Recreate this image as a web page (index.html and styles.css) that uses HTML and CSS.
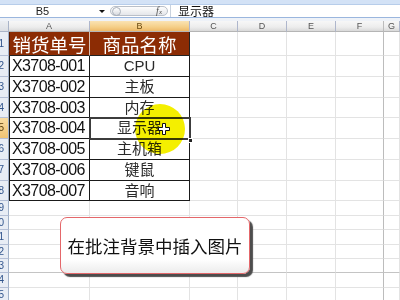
FILE: index.html
```html
<!DOCTYPE html>
<html lang="zh-CN">
<head>
<meta charset="utf-8">
<title>批注</title>
<link rel="stylesheet" href="styles.css">
</head>
<body>
<div class="app">
  <div class="strip"></div>
  <div class="fbar">
    <div class="namebox"><span class="nm">B5</span><span class="dd"></span></div>
    <div class="pill"><span class="knob"></span><span class="fx">f<small>x</small></span></div>
    <div class="formula">显示器</div>
  </div>
  <div class="gap"></div>
  <div class="sheet">
    <div class="corner"></div><div class="ch">A</div><div class="ch on">B</div><div class="ch">C</div><div class="ch">D</div><div class="ch">E</div><div class="ch pf">F</div><div class="ch">G</div>

    <div class="rh"><span>1</span></div><div class="h a">销货单号</div><div class="h b">商品名称</div><i class="c"></i><i class="c"></i><i class="c"></i><i class="c pf"></i><i class="c"></i>
    <div class="rh"><span>2</span></div><div class="d a">X3708-001</div><div class="d b">CPU</div><i class="c"></i><i class="c"></i><i class="c"></i><i class="c pf"></i><i class="c"></i>
    <div class="rh"><span>3</span></div><div class="d a">X3708-002</div><div class="d b">主板</div><i class="c"></i><i class="c"></i><i class="c"></i><i class="c pf"></i><i class="c"></i>
    <div class="rh"><span>4</span></div><div class="d a">X3708-003</div><div class="d b">内存</div><i class="c"></i><i class="c"></i><i class="c"></i><i class="c pf"></i><i class="c"></i>
    <div class="rh on"><span>5</span></div><div class="d a">X3708-004</div><div class="d b sel">显示器</div><i class="c"></i><i class="c"></i><i class="c"></i><i class="c pf"></i><i class="c"></i>
    <div class="rh"><span>6</span></div><div class="d a">X3708-005</div><div class="d b">主机箱</div><i class="c"></i><i class="c"></i><i class="c"></i><i class="c pf"></i><i class="c"></i>
    <div class="rh"><span>7</span></div><div class="d a">X3708-006</div><div class="d b">键鼠</div><i class="c"></i><i class="c"></i><i class="c"></i><i class="c pf"></i><i class="c"></i>
    <div class="rh"><span>8</span></div><div class="d a">X3708-007</div><div class="d b">音响</div><i class="c"></i><i class="c"></i><i class="c"></i><i class="c pf"></i><i class="c"></i>
    <div class="rh"><span>9</span></div><i class="c"></i><i class="c"></i><i class="c"></i><i class="c"></i><i class="c"></i><i class="c pf"></i><i class="c"></i>
    <div class="rh"><span>10</span></div><i class="c"></i><i class="c"></i><i class="c"></i><i class="c"></i><i class="c"></i><i class="c pf"></i><i class="c"></i>
    <div class="rh"><span>11</span></div><i class="c"></i><i class="c"></i><i class="c"></i><i class="c"></i><i class="c"></i><i class="c pf"></i><i class="c"></i>
    <div class="rh"><span>12</span></div><i class="c"></i><i class="c"></i><i class="c"></i><i class="c"></i><i class="c"></i><i class="c pf"></i><i class="c"></i>
    <div class="rh"><span>13</span></div><i class="c pb"></i><i class="c pb"></i><i class="c pb"></i><i class="c pb"></i><i class="c pb"></i><i class="c pb pf"></i><i class="c pb"></i>
    <div class="rh"><span>14</span></div><i class="c"></i><i class="c"></i><i class="c"></i><i class="c"></i><i class="c"></i><i class="c pf"></i><i class="c"></i>
    <div class="rh"><span>15</span></div><i class="c"></i><i class="c"></i><i class="c"></i><i class="c"></i><i class="c"></i><i class="c pf"></i><i class="c"></i>
  </div>

  <div class="handle"></div>
  <div class="spot"></div>
  <svg class="cursor" width="12" height="12" viewBox="0 0 12 12" aria-hidden="true">
    <path d="M4.5 0.5h3v4h4v3h-4v4h-3v-4h-4v-3h4z" fill="#fff" stroke="#111" stroke-width="1"/>
  </svg>
  <div class="callout">在批注背景中插入图片</div>
</div>
</body>
</html>
```
FILE: styles.css
```css
* { box-sizing: border-box; }
html, body { margin: 0; padding: 0; }
body {
  width: 400px;
  height: 300px;
  overflow: hidden;
  background: #fff;
  font-family: "Liberation Sans", "Noto Sans CJK SC", sans-serif;
}
.app { position: relative; width: 400px; height: 300px; overflow: hidden; }

.strip { height: 5px; background: #d3e2f6; border-bottom: 1px solid #b7cdea; }

.fbar {
  height: 13px;
  display: flex;
  align-items: stretch;
  background: #fff;
  border-bottom: 1px solid #9ab6de;
}
.namebox {
  width: 110px;
  display: flex;
  align-items: center;
}
.nm {
  flex: 1;
  text-align: center;
  font-size: 11px;
  line-height: 12px;
  color: #222;
  padding-right: 14px;
}
.dd {
  width: 0; height: 0;
  border-left: 3px solid transparent;
  border-right: 3px solid transparent;
  border-top: 3px solid #111;
  margin-right: 5px;
}
.pill {
  width: 58px;
  margin: 1px 0;
  border: 1px solid #b9bfc8;
  border-radius: 6px;
  background: linear-gradient(#fdfdfd, #e4e6ea);
  display: flex;
  align-items: center;
  justify-content: space-between;
  padding: 0 5px 0 1px;
}
.knob {
  width: 9px; height: 9px;
  border-radius: 50%;
  border: 1px solid #a9b0ba;
  background: linear-gradient(#ffffff, #d6d9de);
}
.fx {
  font-family: "Liberation Serif", serif;
  font-style: italic;
  font-size: 10px;
  color: #555;
  line-height: 1;
}
.fx small { font-size: 7px; }
.formula {
  flex: 1;
  border-left: 1px solid #c9d2de;
  margin-left: 2px;
  padding-left: 7px;
  font-family: "Noto Sans CJK SC", sans-serif;
  font-size: 12px;
  line-height: 12px;
  color: #111;
  display: flex;
  align-items: center;
}
.gap { height: 3px; background: #eef2f8; }

.sheet {
  display: grid;
  grid-template-columns: 9px 81px 100px 48px 49px 49px 48px 16px;
  grid-template-rows: 11px 24px 21px 21px 20px 21px 21px 21px 20px 15px 14px 15px 14px 14px 15px 15px;
}
.sheet > * { display: block; }

.corner {
  background: linear-gradient(#eceff3, #dcdfe4);
  border-right: 1px solid #a9b4c8;
  border-bottom: 1px solid #a9b4c8;
}
.ch {
  background: linear-gradient(#f7f7f7 0%, #ededed 60%, #d9d9d9 100%);
  border-right: 1px solid #aeb6cc;
  border-bottom: 1px solid #b5b5b5;
  font-size: 9px;
  line-height: 10px;
  text-align: center;
  color: #555;
}
.ch.on {
  background: linear-gradient(#fae3b4 0%, #f5cf88 60%, #edb868 100%);
  color: #6a4a10;
}
.rh {
  display: flex !important;
  justify-content: flex-end;
  align-items: center;
  overflow: hidden;
  background: #e8edf5;
  border-right: 1px solid #9fb0c8;
  border-bottom: 1px solid #b4bfd6;
  font-size: 10px;
  line-height: 10px;
  color: #30548c;
  padding-right: 4px;
}
.rh span { flex: none; }
.rh.on { background: linear-gradient(#f8dca2, #f0c474); color: #5a4010; }

.c {
  border-right: 1px solid #e3e3e3;
  border-bottom: 1px solid #e3e3e3;
}
.c.pf, .ch.pf { border-right-color: #bcbcbc; }
.c.pb { border-bottom-color: #c4c4c4; }

.h {
  display: flex !important;
  align-items: center;
  justify-content: center;
  background: #8c2c04;
  color: #fff;
  font-family: "Noto Sans CJK SC", sans-serif;
  font-size: 18.5px;
  line-height: 20px;
  border-bottom: 1px solid #222;
  white-space: nowrap;
}
.h.a { border-right: 1px solid #d9c2b4; border-left: 1px solid #5a1a00; }
.h.b { border-right: 1px solid #222; }

.d {
  border-right: 1px solid #1a1a1a;
  border-bottom: 1px solid #1a1a1a;
  color: #111;
  display: flex !important;
  align-items: center;
  white-space: nowrap;
  line-height: 16px;
}
.d.a {
  border-left: 1px solid #1a1a1a;
  padding-left: 2px;
  font-size: 16px;
  letter-spacing: -0.6px;
}
.d.b {
  justify-content: center;
  font-size: 15px;
  color: #2a2a2a;
}
.d.sel {
  outline: 2px solid #3c3c3c;
  outline-offset: -1px;
  position: relative;
  z-index: 1;
}

.handle {
  position: absolute;
  left: 188px;
  top: 138px;
  width: 5px;
  height: 5px;
  background: #222;
  border: 1px solid #fff;
  z-index: 2;
}
.spot {
  position: absolute;
  left: 135px;
  top: 104px;
  width: 50px;
  height: 50px;
  border-radius: 50%;
  background: #f4ef00;
  mix-blend-mode: multiply;
  z-index: 3;
}
.cursor {
  position: absolute;
  left: 158px;
  top: 123px;
  z-index: 4;
}
.callout {
  position: absolute;
  left: 60px;
  top: 217px;
  width: 190px;
  height: 57px;
  border: 1px solid #e4676a;
  border-radius: 7px;
  background: linear-gradient(#ffffff 0%, #ffffff 75%, #ececec 100%);
  box-shadow: 3px 3px 1px #4d4d4d;
  display: flex;
  align-items: center;
  justify-content: center;
  font-family: "Noto Sans CJK SC", sans-serif;
  font-size: 17.5px;
  color: #111;
  z-index: 5;
}
```
